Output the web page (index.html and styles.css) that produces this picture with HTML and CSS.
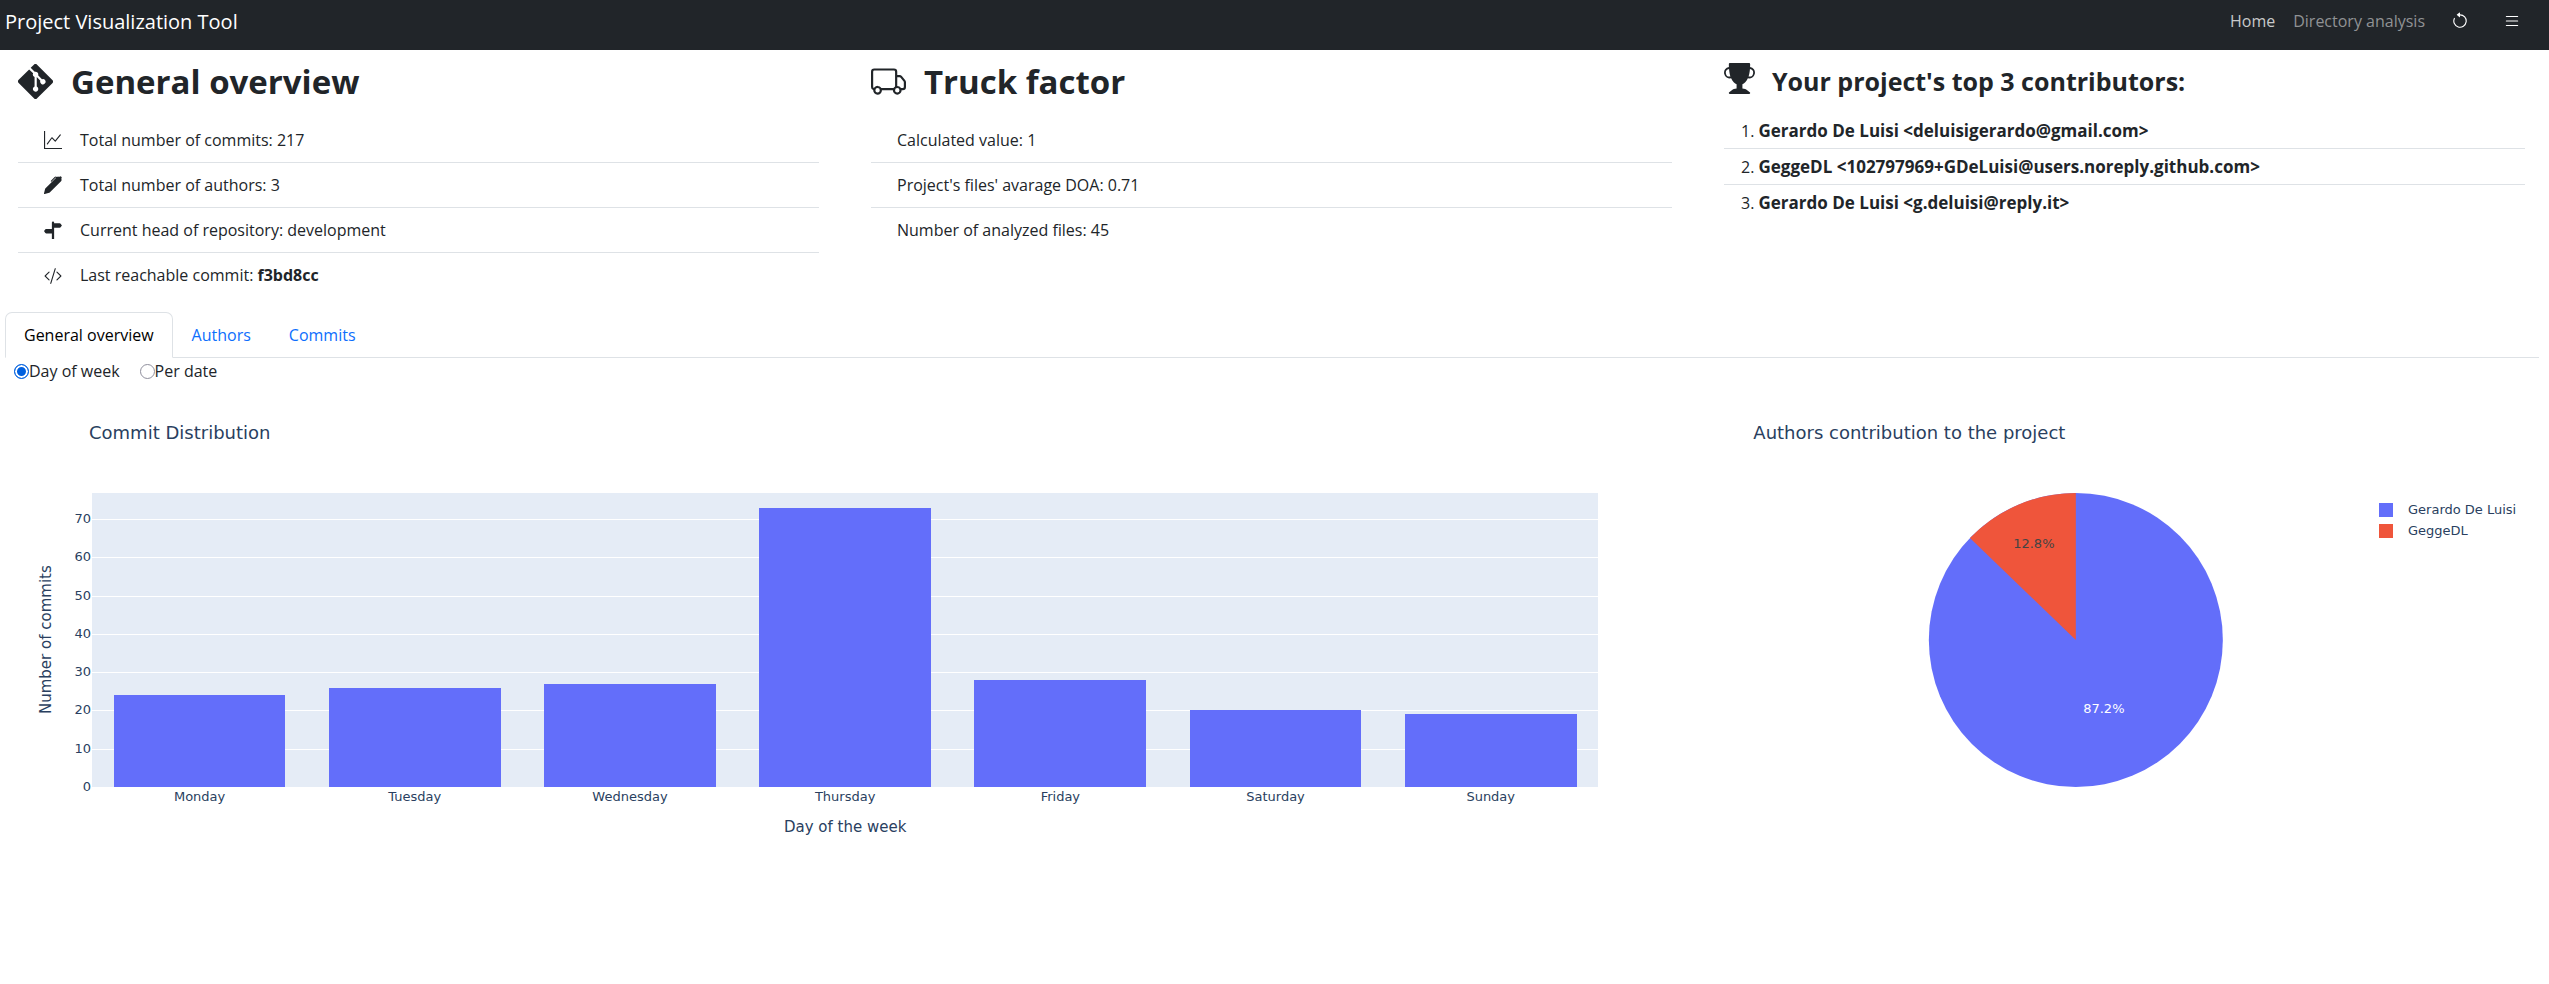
FILE: index.html
```html
<!DOCTYPE html>
<html lang="en">
<head>
<meta charset="utf-8">
<title>Project Visualization Tool</title>
<link rel="stylesheet" href="styles.css">
</head>
<body>
<header class="navbar">
  <a class="brand" href="#">Project Visualization Tool</a>
  <nav class="nav-links">
    <a class="nav-link is-current" href="#">Home</a>
    <a class="nav-link" href="#">Directory analysis</a>
    <button class="icon-button" type="button" aria-label="Reload"><svg class="icon" viewBox="0 0 16 16"><path fill-rule="evenodd" d="M8 3a5 5 0 1 1-4.546 2.914.5.5 0 0 0-.908-.417A6 6 0 1 0 8 2z"/><path d="M8 4.466V.534a.25.25 0 0 0-.41-.192L5.23 2.308a.25.25 0 0 0 0 .384l2.36 1.966A.25.25 0 0 0 8 4.466"/></svg></button>
    <button class="icon-button" type="button" aria-label="Menu"><svg class="icon" viewBox="0 0 16 16"><path fill-rule="evenodd" d="M2.500 12a.5.5 0 0 1 .5-.5h10a.5.5 0 0 1 0 1H3a.5.5 0 0 1-.5-.5m0-4a.5.5 0 0 1 .5-.5h10a.5.5 0 0 1 0 1H3a.5.5 0 0 1-.5-.5m0-4a.5.5 0 0 1 .5-.5h10a.5.5 0 0 1 0 1H3a.5.5 0 0 1-.5-.5"/></svg></button>
  </nav>
</header>
<main>
  <div class="summary">
    <section>
      <h1 class="heading"><svg class="heading-icon" viewBox="0 0 16 16"><path d="M15.698 7.287 8.712.302a1.03 1.03 0 0 0-1.457 0l-1.45 1.45 1.84 1.84a1.223 1.223 0 0 1 1.55 1.56l1.773 1.774a1.224 1.224 0 0 1 1.267 2.025 1.226 1.226 0 0 1-2.002-1.334L8.58 5.963v4.353a1.226 1.226 0 1 1-1.008-.036V5.887a1.226 1.226 0 0 1-.666-1.608L5.093 2.465l-4.79 4.79a1.03 1.03 0 0 0 0 1.457l6.986 6.986a1.03 1.03 0 0 0 1.457 0l6.953-6.953a1.031 1.031 0 0 0 0-1.457"/></svg>General overview</h1>
      <ul class="facts">
        <li class="fact"><svg class="icon" viewBox="0 0 16 16"><path fill-rule="evenodd" d="M0 0h1v15h15v1H0zm14.817 3.113a.5.5 0 0 1 .07.704l-4.5 5.5a.5.5 0 0 1-.74.037L7.06 6.767l-3.656 5.027a.5.5 0 0 1-.808-.588l4-5.5a.5.5 0 0 1 .758-.06l2.609 2.61 4.15-5.073a.5.5 0 0 1 .704-.07"/></svg><span>Total number of commits: 217</span></li>
        <li class="fact"><svg class="icon" viewBox="0 0 16 16"><path d="m13.498.795.149-.149a1.207 1.207 0 1 1 1.707 1.708l-.149.148a1.5 1.5 0 0 1-.059 2.059L4.854 14.854a.5.5 0 0 1-.233.131l-4 1a.5.5 0 0 1-.606-.606l1-4a.5.5 0 0 1 .131-.232l9.642-9.642a.5.5 0 0 0-.642.056L6.854 4.854a.5.5 0 1 1-.708-.708L9.44.854A1.5 1.5 0 0 1 11.5.796a1.5 1.5 0 0 1 1.998-.001"/></svg><span>Total number of authors: 3</span></li>
        <li class="fact"><svg class="icon" viewBox="0 0 16 16"><path d="M7 16h2V6h5a1 1 0 0 0 .8-.4l.975-1.3a.5.5 0 0 0 0-.6L14.8 2.400A1 1 0 0 0 14 2H9v-.586a1 1 0 0 0-2 0V7H2a1 1 0 0 0-.8.4L.225 8.700a.5.5 0 0 0 0 .6l.975 1.300a1 1 0 0 0 .8.4h5z"/></svg><span>Current head of repository: development</span></li>
        <li class="fact"><svg class="icon" viewBox="0 0 16 16"><path d="M10.478 1.647a.5.5 0 1 0-.956-.294l-4 13a.5.5 0 0 0 .956.294zM4.854 4.146a.5.5 0 0 1 0 .708L1.707 8l3.147 3.146a.5.5 0 0 1-.708.708l-3.5-3.5a.5.5 0 0 1 0-.708l3.5-3.5a.5.5 0 0 1 .708 0m6.292 0a.5.5 0 0 0 0 .708L14.293 8l-3.147 3.146a.5.5 0 0 0 .708.708l3.5-3.5a.5.5 0 0 0 0-.708l-3.5-3.5a.5.5 0 0 0-.708 0"/></svg><span>Last reachable commit: <strong>f3bd8cc</strong></span></li>
      </ul>
    </section>
    <section>
      <h1 class="heading"><svg class="heading-icon" viewBox="0 0 16 16"><path d="M0 3.500A1.500 1.500 0 0 1 1.500 2h9A1.500 1.500 0 0 1 12 3.500V5h1.020a1.500 1.500 0 0 1 1.170.563l1.481 1.850a1.500 1.500 0 0 1 .329.938V10.500a1.500 1.500 0 0 1-1.500 1.500H14a2 2 0 1 1-4 0H5a2 2 0 1 1-3.998-.085A1.500 1.500 0 0 1 0 10.500zm1.294 7.456A2 2 0 0 1 4.732 11h5.536a2 2 0 0 1 .732-.732V3.500a.5.5 0 0 0-.5-.5h-9a.5.5 0 0 0-.5.5v7a.5.5 0 0 0 .294.456M12 10a2 2 0 0 1 1.732 1h.768a.5.5 0 0 0 .5-.5V8.350a.5.5 0 0 0-.11-.312l-1.480-1.850A.5.5 0 0 0 13.020 6H12zm-9 1a1 1 0 1 0 0 2 1 1 0 0 0 0-2m9 0a1 1 0 1 0 0 2 1 1 0 0 0 0-2"/></svg>Truck factor</h1>
      <ul class="facts">
        <li class="fact">Calculated value: 1</li>
        <li class="fact">Project's files' avarage DOA: 0.71</li>
        <li class="fact">Number of analyzed files: 45</li>
      </ul>
    </section>
    <section>
      <h2 class="heading heading-small"><svg class="heading-icon" viewBox="0 0 16 16"><path d="M2.500.5A.5.5 0 0 1 3 0h10a.5.5 0 0 1 .5.5q0 .807-.034 1.536a3 3 0 1 1-1.133 5.890c-.79 1.865-1.878 2.777-2.833 3.011v2.173l1.425.356c.194.048.377.135.537.255L13.300 15.100a.5.5 0 0 1-.3.9H3a.5.5 0 0 1-.3-.9l1.838-1.379c.16-.12.343-.207.537-.255L6.500 13.110v-2.173c-.955-.234-2.043-1.146-2.833-3.012a3 3 0 1 1-1.132-5.890A33 33 0 0 1 2.500.5m.099 2.540a2 2 0 0 0 .72 3.935c-.333-1.050-.588-2.346-.72-3.935m10.083 3.935a2 2 0 0 0 .72-3.935c-.133 1.590-.388 2.885-.72 3.935"/></svg>Your project's top 3 contributors:</h2>
      <ol class="contributors">
        <li class="contributor"><span>1.</span> <strong>Gerardo De Luisi &lt;deluisigerardo@gmail.com&gt;</strong></li>
        <li class="contributor"><span>2.</span> <strong>GeggeDL &lt;102797969+GDeLuisi@users.noreply.github.com&gt;</strong></li>
        <li class="contributor"><span>3.</span> <strong>Gerardo De Luisi &lt;g.deluisi@reply.it&gt;</strong></li>
      </ol>
    </section>
  </div>

  <div class="tabs" role="tablist">
    <button class="tab is-active" type="button" role="tab" aria-selected="true">General overview</button>
    <button class="tab" type="button" role="tab">Authors</button>
    <button class="tab" type="button" role="tab">Commits</button>
  </div>

  <div class="options">
    <label class="option"><input class="radio" type="radio" name="grouping" checked>Day of week</label>
    <label class="option"><input class="radio" type="radio" name="grouping">Per date</label>
  </div>

  <div class="charts">
    <figure class="chart">
      <figcaption class="chart-title">Commit Distribution</figcaption>
      <div class="bar-chart">
        <div class="y-title">Number of commits</div>
        <div class="y-ticks"><span>70</span><span>60</span><span>50</span><span>40</span><span>30</span><span>20</span><span>10</span><span>0</span></div>
        <div class="plot">
          <div class="gridlines"><i></i><i></i><i></i><i></i><i></i><i></i><i></i></div>
          <div class="bars">
            <div class="bar" style="height:31.23%"></div>
            <div class="bar" style="height:33.84%"></div>
            <div class="bar" style="height:35.14%"></div>
            <div class="bar" style="height:95%"></div>
            <div class="bar" style="height:36.44%"></div>
            <div class="bar" style="height:26.03%"></div>
            <div class="bar" style="height:24.73%"></div>
          </div>
        </div>
        <div class="x-ticks"><span>Monday</span><span>Tuesday</span><span>Wednesday</span><span>Thursday</span><span>Friday</span><span>Saturday</span><span>Sunday</span></div>
        <div class="x-title">Day of the week</div>
      </div>
    </figure>
    <figure class="chart chart-pie">
      <figcaption class="chart-title">Authors contribution to the project</figcaption>
      <div class="pie-row">
        <svg class="pie" viewBox="-147 -147 294 294" role="img" aria-label="Gerardo De Luisi 87.2%, GeggeDL 12.8%">
          <circle class="slice-main" r="147"/>
          <path class="slice-second" d="M0 0V-147A147 147 0 0 0 -105.900 -101.950Z"/>
          <text class="pie-label pie-label-second" x="-42" y="-92">12.8%</text>
          <text class="pie-label pie-label-main" x="28" y="73">87.2%</text>
        </svg>
        <ul class="legend">
          <li class="legend-item"><span class="swatch swatch-main"></span>Gerardo De Luisi</li>
          <li class="legend-item"><span class="swatch swatch-second"></span>GeggeDL</li>
        </ul>
      </div>
    </figure>
  </div>
</main>
</body>
</html>
```
FILE: styles.css
```css
* { box-sizing: border-box; }
body {
  margin: 0;
  background: #fff;
  color: #212529;
  font: 16px/27px "Open Sans", "Noto Sans", sans-serif;
}
h1, h2, ul, ol, figure { margin: 0; padding: 0; }
ul, ol { list-style: none; }
.icon { width: 18px; height: 18px; fill: currentColor; flex: none; display: block; }

.navbar {
  display: flex;
  justify-content: space-between;
  align-items: center;
  height: 50px;
  padding: 0 28px 8px 5px;
  background: #212529;
}
.brand { color: #fff; font-size: 20px; text-decoration: none; }
.nav-links { display: flex; align-items: center; }
.nav-link { margin-right: 18px; color: #909294; text-decoration: none; }
.nav-link.is-current { color: #c8c9ca; }
.icon-button { margin-left: 8px; padding: 0; border: 0; background: none; color: #fff; }
.icon-button + .icon-button { margin-left: 34px; }

.summary {
  display: grid;
  grid-template-columns: repeat(3, minmax(0, 1fr));
  gap: 52px;
  padding: 9px 24px 0 18px;
}
.heading {
  display: flex;
  align-items: center;
  gap: 18px;
  height: 44px;
  font-size: 33px;
  font-weight: 700;
}
.heading-icon { width: 35px; height: 35px; fill: currentColor; flex: none; }
.heading-small { gap: 17px; font-size: 25px; }
.heading-small .heading-icon { width: 31px; height: 31px; margin-bottom: 6px; }
.facts { padding-top: 15px; }
.fact {
  display: flex;
  align-items: center;
  gap: 18px;
  height: 45px;
  padding-left: 26px;
}
.contributors { padding-top: 10px; }
.contributor { height: 36px; padding: 6px 17px 0; line-height: 24px; }
.contributor strong { font-size: 17px; }
.fact:not(:last-child), .contributor:not(:last-child) { border-bottom: 1px solid #dee2e6; }

.tabs {
  display: flex;
  margin: 14px 10px 0 5px;
  border-bottom: 1px solid #dee2e6;
}
.tab {
  height: 46px;
  margin-bottom: -1px;
  padding: 0 18px;
  border: 1px solid transparent;
  border-radius: 7px 7px 0 0;
  background: none;
  color: #0d6efd;
  font: inherit;
}
.tab.is-active { border-color: #dee2e6 #dee2e6 #fff; background: #fff; color: #000; }

.options { display: flex; gap: 20px; padding-left: 14px; }
.option { display: flex; align-items: center; }
.radio {
  appearance: none;
  width: 15px;
  height: 15px;
  margin: 0;
  border: 1px solid #8f8f9d;
  border-radius: 50%;
}
.radio:checked { border: 1px solid #0060df; background: #0060df; box-shadow: inset 0 0 0 2px #fff; }

.charts {
  display: grid;
  grid-template-columns: minmax(0, 2fr) minmax(0, 1fr);
  padding-top: 34px;
  color: #2a3f5f;
  font: 13px/20px "DejaVu Sans", Verdana, sans-serif;
}
.chart-title { padding-left: 89px; font-size: 18px; line-height: 27px; }
.chart-pie .chart-title { padding-left: 54px; }
.bar-chart {
  display: grid;
  grid-template-columns: 56px 36px minmax(0, 1fr);
  grid-template-rows: 294px 20px auto;
  padding: 47px 101px 0 0;
}
.y-title {
  writing-mode: vertical-rl;
  transform: rotate(180deg);
  justify-self: end;
  text-align: center;
  font-size: 15px;
}
.y-ticks {
  display: flex;
  flex-direction: column;
  margin: 7px 0 -19px;
  padding-right: 1px;
}
.y-ticks span { flex: 1; display: flex; align-items: center; justify-content: flex-end; }
.plot { display: grid; background: #e5ecf6; }
.gridlines { grid-area: 1 / 1; display: flex; flex-direction: column; padding-top: 26px; }
.gridlines i { flex: 1; border-top: 1px solid #fff; }
.bars { grid-area: 1 / 1; display: flex; align-items: flex-end; justify-content: space-around; }
.bar { width: 11.4%; background: #636efa; }
.x-ticks { grid-column: 3; display: flex; }
.x-ticks span { flex: 1 1 0; text-align: center; }
.x-title { grid-column: 3; padding-top: 10px; text-align: center; font-size: 15px; }

.pie-row { display: flex; align-items: flex-start; padding: 47px 0 0 74px; }
.pie { flex: 1; min-width: 0; height: 294px; }
.slice-main { fill: #636efa; }
.slice-second { fill: #ef553b; }
.pie-label { font-size: 13px; text-anchor: middle; }
.pie-label-main { fill: #fff; }
.pie-label-second { fill: #444; }
.legend { width: 170px; padding-top: 6px; }
.legend-item { display: flex; align-items: center; gap: 15px; height: 21px; white-space: nowrap; }
.swatch { width: 14px; height: 14px; flex: none; }
.swatch-main { background: #636efa; }
.swatch-second { background: #ef553b; }
```
